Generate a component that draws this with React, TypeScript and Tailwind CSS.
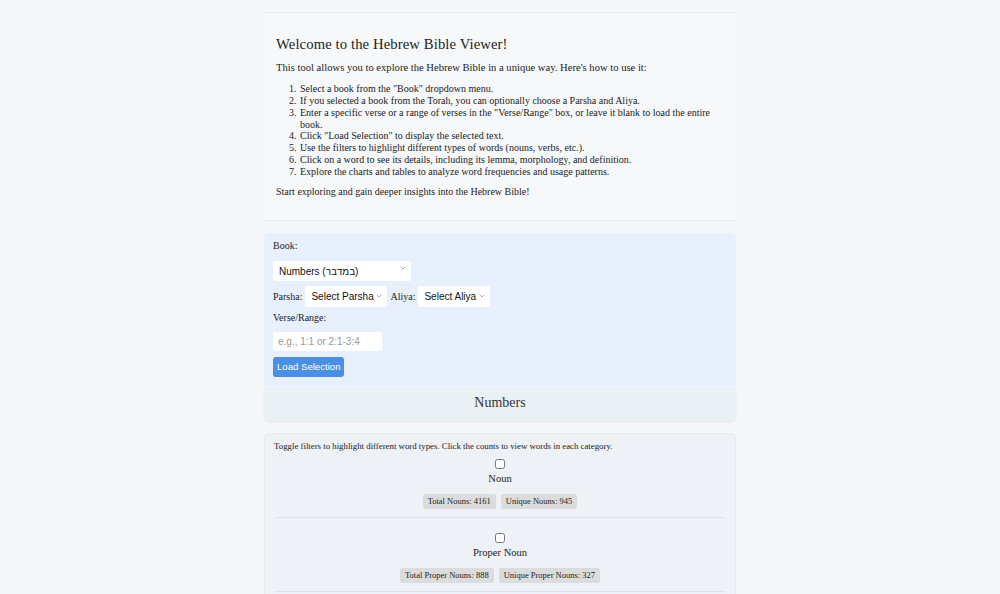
import { ChevronDown } from "lucide-react";

const serif = { fontFamily: '"Liberation Serif", "DejaVu Serif", serif' };

const steps = [
  'Select a book from the "Book" dropdown menu.',
  "If you selected a book from the Torah, you can optionally choose a Parsha and Aliya.",
  'Enter a specific verse or a range of verses in the "Verse/Range" box, or leave it blank to load the entire book.',
  'Click "Load Selection" to display the selected text.',
  "Use the filters to highlight different types of words (nouns, verbs, etc.).",
  "Click on a word to see its details, including its lemma, morphology, and definition.",
  "Explore the charts and tables to analyze word frequencies and usage patterns.",
];

const filters = [
  { name: "Noun", total: "Total Nouns: 4161", unique: "Unique Nouns: 945" },
  { name: "Proper Noun", total: "Total Proper Nouns: 888", unique: "Unique Proper Nouns: 327" },
];

const Select = ({ label, width }: { label: string; width: string }) => (
  <div className={`relative ${width} h-full`}>
    <select className="w-full h-full appearance-none rounded-[2px] bg-white pl-[6px] pr-[11px] text-[10px] text-[#111] font-['Liberation_Sans','DejaVu_Sans',sans-serif] outline-none">
      <option>{label}</option>
    </select>
    <ChevronDown className="absolute right-[4px] top-1/2 -translate-y-1/2 w-[8px] h-[8px] text-[#555] pointer-events-none" strokeWidth={1.5} />
  </div>
);

const FilterRow = ({ name, total, unique }: { name: string; total: string; unique: string }) => (
  <div className="flex flex-col items-center border-b border-[#dfe3e8] pt-[4px] pb-[8px] mx-[1px]">
    <input type="checkbox" className="w-[10px] h-[10px] m-0" />
    <div className="text-[10.5px] leading-[14px] mt-[3px] text-[#222]">{name}</div>
    <div className="flex gap-[5px] mt-[8px]">
      <span className="bg-[#dcdcdc] rounded-[2px] px-[5px] h-[15px] leading-[15px] text-[8.5px] text-[#222]">{total}</span>
      <span className="bg-[#dcdcdc] rounded-[2px] px-[5px] h-[15px] leading-[15px] text-[8.5px] text-[#222]">{unique}</span>
    </div>
  </div>
);

export default function App() {
  return (
    <div className="h-[594px] bg-[#f6f7f9] overflow-hidden" style={serif}>
      <div className="w-[472px] mx-auto pt-3">
        {/* Intro */}
        <section className="border-y border-[#e9ebee] bg-[#f7f8fa] px-3 pt-[22px] pb-[22px] text-[#222]">
          <h1 className="text-[14.7px] leading-[19px] text-[#222] tracking-[0.1px]">Welcome to the Hebrew Bible Viewer!</h1>
          <p className="text-[10.6px] leading-[12px] mt-2">
            This tool allows you to explore the Hebrew Bible in a unique way. Here's how to use it:
          </p>
          <ol className="list-decimal pl-[23px] pr-[12px] mt-[9px] text-[10px] leading-[11.85px]">
            {steps.map((s) => (
              <li key={s} className="pl-[1px]">{s}</li>
            ))}
          </ol>
          <p className="text-[10px] leading-[12px] mt-2">
            Start exploring and gain deeper insights into the Hebrew Bible!
          </p>
        </section>

        {/* Controls */}
        <section className="mt-[12px] bg-[#e7f0fc] rounded-t-[5px] px-[9px] pt-[7px] pb-[9px] text-[#222]">
          <div className="text-[10px] leading-[12px]">Book:</div>
          <div className="mt-[6px] h-[20px] flex">
            <Select label="Numbers (במדבר)" width="w-[138px]" />
          </div>
          <div className="mt-[8px] h-[21px] flex items-center text-[10px]">
            <span className="mr-[3px]">Parsha:</span>
            <Select label="Select Parsha" width="w-[82px]" />
            <span className="mx-[3px]">Aliya:</span>
            <Select label="Select Aliya" width="w-[72px]" />
          </div>
          <div className="mt-[5px] text-[10px] leading-[12px]">Verse/Range:</div>
          <input
            placeholder="e.g., 1:1 or 2:1-3:4"
            className="mt-2 block w-[109px] h-[19px] bg-white rounded-[2px] px-[5px] text-[10px] placeholder:text-[#9a9a9a] font-['Liberation_Sans','DejaVu_Sans',sans-serif] outline-none"
          />
          <button className="mt-[6px] block h-[20px] px-[4px] bg-[#4a90e2] text-white rounded-[3px] text-[9.6px] font-['Liberation_Sans','DejaVu_Sans',sans-serif]">
            Load Selection
          </button>
        </section>

        {/* Book title */}
        <div className="mt-[1px] h-[34px] bg-[#e9f1f5] rounded-b-[5px] shadow-[0_1px_2px_rgba(0,0,0,0.08)] flex items-center justify-center text-[14px] text-[#333] pb-[2px]">
          Numbers
        </div>

        {/* Filters */}
        <section className="mt-[12px] bg-[#eef1f5] rounded-[5px] border border-[#e6e9ee] px-[9px] pt-[7px] pb-6">
          <div className="text-[8.8px] leading-[11px] text-[#222]">
            Toggle filters to highlight different word types. Click the counts to view words in each category.
          </div>
          {filters.map((f, i) => (
            <div key={f.name} className={i === 0 ? "mt-[3px]" : "mt-[11px]"}>
              <FilterRow name={f.name} total={f.total} unique={f.unique} />
            </div>
          ))}
        </section>
      </div>
    </div>
  );
}
